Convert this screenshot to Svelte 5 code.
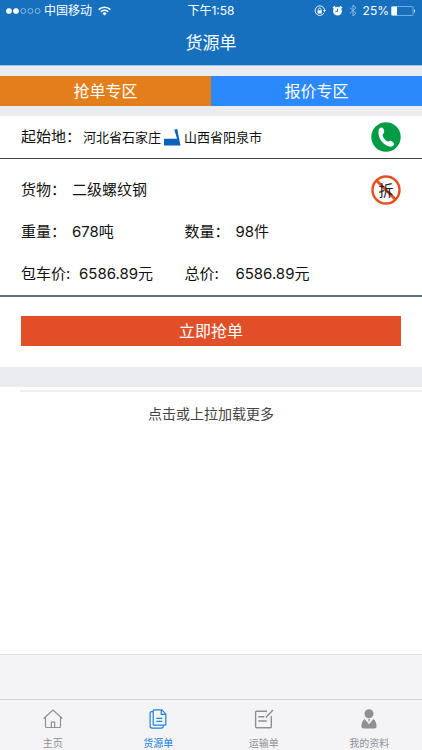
<script lang="ts">
	type Zone = 'grab' | 'quote';
	type TabId = 'home' | 'goods' | 'transport' | 'profile';

	interface Field {
		label: string;
		value: string;
		wide?: boolean;
	}

	const rows: Field[][] = [
		[{ label: '货物：', value: '二级螺纹钢' }],
		[
			{ label: '重量：', value: '678吨' },
			{ label: '数量：', value: '98件' },
		],
		[
			{ label: '包车价:', value: '6586.89元', wide: true },
			{ label: '总价:', value: '6586.89元' },
		],
	];

	const tabs: { id: TabId; label: string }[] = [
		{ id: 'home', label: '主页' },
		{ id: 'goods', label: '货源单' },
		{ id: 'transport', label: '运输单' },
		{ id: 'profile', label: '我的资料' },
	];

	let zone: Zone = $state('grab');
	let current: TabId = $state('goods');
</script>

<div class="page">
	<header>
		<div class="status">
			<div class="side">
				<svg width="35" height="8" viewBox="0 0 35 8" fill="none" stroke="#fff" stroke-width="0.6">
					<circle cx="3" cy="4" r="2.6" fill="#fff" />
					<circle cx="10" cy="4" r="2.6" fill="#fff" />
					<circle cx="17.3" cy="4" r="2.5" opacity="0.8" />
					<circle cx="24.4" cy="4" r="2.5" opacity="0.8" />
					<circle cx="31.6" cy="4" r="2.5" opacity="0.8" />
				</svg>
				<span>中国移动</span>
				<svg class="wifi" width="13" height="10" viewBox="0 0 13 10" fill="none" stroke="#fff" stroke-width="1.5">
					<path d="M0.7 3.6a8.2 8.2 0 0 1 11.6 0" />
					<path d="M2.8 5.8a5.2 5.2 0 0 1 7.4 0" />
					<path d="M6.5 9.6 4.4 7.4a3 3 0 0 1 4.2 0z" fill="#fff" stroke="none" />
				</svg>
			</div>
			<span class="time">下午1:58</span>
			<div class="side right">
				<svg width="12" height="12" viewBox="0 0 12 12" fill="none" stroke="#fff">
					<path d="M10.2 7.7a4.8 4.8 0 1 1 .4-2.8" stroke-width="0.9" />
					<path d="M9 4.9h3l-1.5 2z" fill="#fff" stroke="none" />
					<rect x="3.6" y="5.3" width="4.2" height="3.2" fill="#fff" stroke="none" />
					<path d="M4.4 5.4V4.3a1.3 1.3 0 0 1 2.6 0v1.1" stroke-width="0.8" />
				</svg>
				<svg width="11" height="12" viewBox="0 0 11 12">
					<circle cx="5.5" cy="6.2" r="4.4" fill="#fff" />
					<path d="M1 3.2 3 1.400M10 3.200 8 1.400" stroke="#fff" stroke-width="1.5" />
					<path d="M5.6 3.6v2.8H3.4" fill="none" stroke="#1670be" stroke-width="1" />
				</svg>
				<svg width="8" height="13" viewBox="0 0 8 13" fill="none" stroke="#8bbbe4" stroke-width="1">
					<path d="M.8 3.6l6.2 5.6-3 2.8V1l3 2.8L.8 9.4" />
				</svg>
				<span class="percent">25%</span>
				<svg width="25" height="10" viewBox="0 0 25 10">
					<rect x="0.5" y="0.5" width="21.6" height="9" rx="1" fill="none" stroke="#8bbbe4" stroke-width="0.8" />
					<rect x="0.5" y="0.7" width="5.5" height="8.6" fill="#fff" />
					<path d="M23 3.2c1.2.3 1.2 3.3 0 3.6z" fill="#fff" />
				</svg>
			</div>
		</div>
		<h1>货源单</h1>
	</header>

	<div class="zones">
		<button class="grab" aria-pressed={zone === 'grab'} onclick={() => (zone = 'grab')}>抢单专区</button>
		<button class="quote" aria-pressed={zone === 'quote'} onclick={() => (zone = 'quote')}>报价专区</button>
	</div>

	<main>
		<article>
			<div class="route">
				<span>起始地：</span>
				<span class="place from">河北省石家庄</span>
				<svg class="arrow" width="17" height="17" viewBox="0 0 17 17" fill="#0a63b8">
					<path d="M0 9.800h13L10.300.4l2.900-.4L16.500 16.400H0z" />
				</svg>
				<span class="place">山西省阳泉市</span>
				<button class="call" aria-label="拨打电话">
					<svg width="30" height="30" viewBox="0 0 30 30">
						<circle cx="15" cy="15" r="14.7" fill="#049b47" />
						<path
							d="M8 7.2C9 5.6 11 4.9 12 6.2c1.2 1.5 1.5 3.200 1 4.500-.4 1-1.500 1.500-1.400 2.500.3 2.300 2.800 5.200 5 6.200 1.300.5 2-.8 3.300-.5 1.300.3 2.500 1.300 3 2.500.6 1.600-1 2.900-2.700 3.200-3 .5-6.500-1.700-9-4.600C8.600 17 6.300 11 8 7.200z"
							fill="#fff"
						/>
					</svg>
				</button>
			</div>

			<div class="details">
				{#each rows as row, i}
					<div class="row">
						{#each row as field}
							<div class="field">
								<span class="label" class:wide={field.wide}>{field.label}</span>
								<span>{field.value}</span>
							</div>
						{/each}
						{#if i === 0}
							<svg class="no-split" width="30" height="30" viewBox="0 0 30 30">
								<path d="M5.3 5.3 24.7 24.7" stroke="#e64f20" stroke-width="3" />
								<text x="15" y="20.5" text-anchor="middle">拆</text>
								<circle cx="15" cy="15" r="13.5" fill="none" stroke="#e64f20" stroke-width="2.4" />
							</svg>
						{/if}
					</div>
				{/each}
			</div>

			<div class="action">
				<button>立即抢单</button>
			</div>
		</article>

		<button class="more">点击或上拉加载更多</button>
	</main>

	<div class="spacer"></div>

	<nav>
		{#each tabs as tab}
			<button class="tab" class:active={current === tab.id} onclick={() => (current = tab.id)}>
				<svg width="20" height="20" viewBox="0 0 20 20" fill="none" stroke="currentColor" stroke-width="1.2">
					{#if tab.id === 'home'}
						<path d="M1 9.3 10 1l9 8.3M2.5 8v9.500q0 1 1 1h13q1 0 1-1V8" stroke-linecap="round" />
						<path d="M8.4 18.500v-5.300h3.200v5.300" />
					{:else if tab.id === 'goods'}
						<path d="M6.200.9h7.600l4 4v10.300q0 1-1 1H6.200q-1 0-1-1V1.900q0-1 1-1z" />
						<path d="M13.300 1v4.400h4.400M8.300 9.300h6M8.300 12.300h6" />
						<path d="M5 2.600H3.600q-1.500 0-1.500 1.500v13q0 2 2 2h9.500q1.500 0 2-2.500" />
					{:else if tab.id === 'transport'}
						<path d="M13 2.200H2.600q-1 0-1 1v14.600q0 1 1 1h13.700q1 0 1-1V7" stroke-width="1.4" />
						<path d="M4.300 7.800h6M4.300 12h8.500M12 8.200 19 1M11.800 8.400l1.200-.3" stroke-width="1.4" />
					{:else}
						<circle cx="10" cy="4.800" r="4.500" fill="currentColor" stroke="none" />
						<path
							d="M5.600 10 10 15.200 14.400 10c2 1 3.200 4.500 3.200 7.500q0 2-2.200 2H4.600q-2.200 0-2.200-2c0-3 1.200-6.500 3.200-7.500z"
							fill="currentColor"
							stroke="none"
						/>
						<path d="M8.900 10.300h2.200L10 13z" fill="currentColor" stroke="none" />
					{/if}
				</svg>
				<span>{tab.label}</span>
			</button>
		{/each}
	</nav>
</div>

<style>
	:global(body) {
		margin: 0;
	}

	.page {
		background: #fff;
		color: #111;
		display: flex;
		flex-direction: column;
		font-family: Inter, 'Noto Sans CJK SC', sans-serif;
		font-size: 15px;
		line-height: 20px;
		min-height: 100vh;
	}

	button {
		background: none;
		border: none;
		color: inherit;
		cursor: pointer;
		font: inherit;
		margin: 0;
		padding: 0;
	}

	svg {
		display: block;
		flex: none;
	}

	header {
		background: #1670be;
		border-bottom: 1px solid #9cc8f0;
		color: #fff;
	}

	.status {
		align-items: center;
		display: grid;
		font-size: 12px;
		grid-template-columns: 1fr auto 1fr;
		height: 21px;
		padding: 0 6px;
	}

	.side {
		align-items: center;
		display: flex;
		gap: 3px;
	}

	.wifi {
		margin-left: 3px;
	}

	.right {
		gap: 6px;
		justify-content: flex-end;
	}

	.percent {
		margin-right: -4px;
	}

	h1 {
		font-size: 17px;
		font-weight: 400;
		line-height: 44px;
		margin: 0;
		text-align: center;
	}

	.zones {
		background: #ebecf1;
		display: grid;
		grid-template-columns: 1fr 1fr;
		padding: 10px 0;
	}

	.zones button {
		color: #fff;
		font-size: 16px;
		height: 30px;
	}

	.zones .grab {
		background: #e27f1c;
	}

	.zones .quote {
		background: #2b89fb;
	}

	article {
		border-bottom: 20px solid #ebecf1;
	}

	.route {
		align-items: center;
		border-bottom: 1px solid #3f4650;
		display: flex;
		height: 42px;
		padding: 0 21px;
	}

	.place {
		font-size: 13px;
	}

	.from {
		margin-left: 2px;
	}

	.arrow {
		margin: 0 3px;
	}

	.call {
		margin-left: auto;
	}

	.details {
		border-bottom: 2px solid #66707a;
		padding: 10px 21px 0;
	}

	.row {
		align-items: center;
		display: grid;
		grid-template-columns: 43% 1fr;
		height: 42px;
	}

	.field {
		display: flex;
		white-space: nowrap;
	}

	.label {
		width: 51px;
	}

	.label.wide {
		width: 58px;
	}

	.no-split {
		justify-self: end;
	}

	.no-split text {
		fill: #222;
		font-size: 15px;
	}

	.action {
		padding: 19px 21px 21px;
	}

	.action button {
		background: #e04f28;
		color: #fff;
		display: block;
		font-size: 16px;
		height: 30px;
		width: 100%;
	}

	.more {
		border-top: 2px solid #eeeff2;
		color: #444;
		display: block;
		font-size: 14px;
		margin: 3px 0 0 20px;
		padding: 12px 20px 12px 0;
		width: calc(100% - 20px);
	}

	.spacer {
		background: #f4f4f7;
		border-top: 1px solid #e3e3e6;
		height: 44px;
		margin-top: auto;
	}

	nav {
		background: #f4f4f7;
		border-top: 1px solid #d3d4d8;
		display: grid;
		grid-template-columns: repeat(4, 1fr);
		height: 50px;
	}

	.tab {
		align-items: center;
		color: #8f9094;
		display: flex;
		flex-direction: column;
		font-size: 10px;
		gap: 7px;
		line-height: 14px;
		padding-top: 9px;
	}

	.tab.active {
		color: #2080dc;
	}
</style>
